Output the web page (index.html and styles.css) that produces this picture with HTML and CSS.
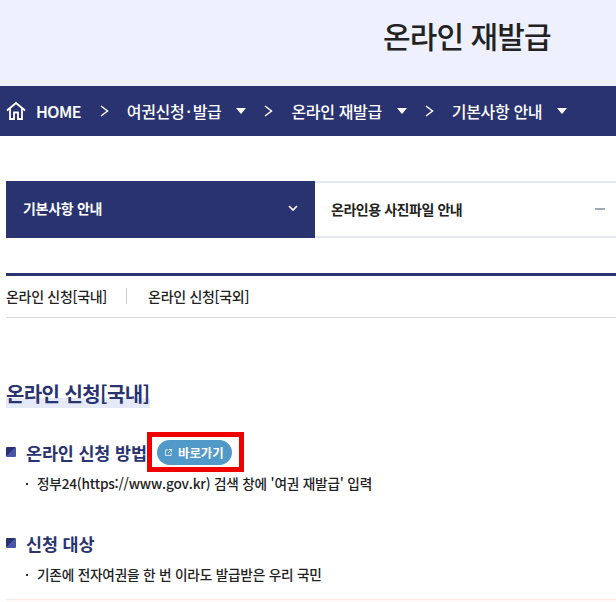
FILE: index.html
```html
<!DOCTYPE html>
<html lang="ko">
<head>
<meta charset="utf-8">
<title>온라인 재발급</title>
<link rel="stylesheet" href="styles.css">
</head>
<body>
<header class="hero"><h1 class="hero-title">온라인 재발급</h1></header>
<nav class="crumbs">
  <svg class="home" viewBox="0 0 20 20" width="20" height="20" fill="none" stroke="#fff" stroke-width="1.8"><path d="M1 9.500 10 2l9 7.500M4 7.500V18h4v-6.500h4V18h4V7.500"/></svg>
  <span class="crumb crumb-home">HOME</span>
  <svg class="sep" viewBox="0 0 9 14" width="9" height="14" fill="none" stroke="#fff" stroke-width="1.500"><path d="M1 2l6.500 5L1 12"/></svg>
  <span class="crumb">여권신청<span class="mid">·</span>발급</span><span class="tri"></span>
  <svg class="sep" viewBox="0 0 9 14" width="9" height="14" fill="none" stroke="#fff" stroke-width="1.500"><path d="M1 2l6.500 5L1 12"/></svg>
  <span class="crumb">온라인 재발급</span><span class="tri"></span>
  <svg class="sep" viewBox="0 0 9 14" width="9" height="14" fill="none" stroke="#fff" stroke-width="1.500"><path d="M1 2l6.500 5L1 12"/></svg>
  <span class="crumb">기본사항 안내</span><span class="tri"></span>
</nav>
<main class="content">
  <div class="tabs">
    <div class="tab tab-on"><span>기본사항 안내</span>
      <svg viewBox="0 0 10 7" width="10" height="7" fill="none" stroke="#fff" stroke-width="1.600"><path d="M1 1l4 4 4-4"/></svg>
    </div>
    <div class="tab tab-off"><span>온라인용 사진파일 안내</span><i class="dash"></i></div>
  </div>
  <div class="subtabs">
    <span class="subtab">온라인 신청[국내]</span>
    <span class="subtab subtab-next">온라인 신청[국외]</span>
  </div>
  <h2 class="section-title">온라인 신청[국내]</h2>
  <section class="block">
    <h3 class="block-title"><i class="bullet"></i>온라인 신청 방법
      <span class="btn-wrap"><a class="btn">
        <svg viewBox="0 0 8 8" width="7" height="7" fill="none" stroke="#fff" stroke-width="0.900"><path d="M3.500 1H.5v6.500H7V4.500M4.500.5h3v3M7.500.5 3.500 4.500"/></svg>바로가기</a></span>
    </h3>
    <p class="item">정부24(https://www.gov.kr) 검색 창에 '여권 재발급' 입력</p>
  </section>
  <section class="block block-2">
    <h3 class="block-title"><i class="bullet"></i>신청 대상</h3>
    <p class="item">기존에 전자여권을 한 번 이라도 발급받은 우리 국민</p>
  </section>
  <div class="note"></div>
</main>
</body>
</html>
```
FILE: styles.css
```css
* { box-sizing: border-box; }
html, body { margin: 0; padding: 0; }
body {
  width: 616px;
  height: 602px;
  overflow: hidden;
  background: #fff;
  font-family: "Noto Sans CJK KR", "Noto Sans", sans-serif;
  color: #222;
}
.hero { height: 86px; background: #eef0fd; padding: 13px 0 0 383px; }
.hero-title { margin: 0; font-size: 30px; line-height: 44px; font-weight: 500; color: #222; letter-spacing: -0.9px; white-space: nowrap; }
.crumbs { height: 50px; background: #29336f; display: flex; align-items: center; padding-left: 7px; color: #fff; }
.home { flex: none; margin-right: 10px; margin-left: -1px; }
.crumb { font-size: 16px; font-weight: 500; letter-spacing: -0.35px; white-space: nowrap; }
.crumb-home { letter-spacing: -0.5px; -webkit-text-stroke: 0.2px #fff; }
.mid { margin: 0 2px; }
.sep { flex: none; margin: 0 18px 0 19px; }
.tri { flex: none; width: 0; height: 0; margin-left: 15px; margin-right: -1px; border-left: 5px solid transparent; border-right: 5px solid transparent; border-top: 6px solid #fff; }
.content { padding: 45px 0 0 6px; }
.tabs { display: flex; height: 57px; }
.tab { display: flex; align-items: center; justify-content: space-between; font-size: 14px; line-height: 20px; font-weight: 700; letter-spacing: -0.3px; padding-bottom: 2px; }
.tab-on { width: 309px; background: #29336f; color: #fff; padding: 0 17px 3px 17px; }
.tab-off { flex: 1; border-top: 2px solid #e5e8ec; border-bottom: 2px solid #e5e8ec; padding: 0 11px 1px 16px; color: #222; letter-spacing: -0.45px; }
.dash { width: 10px; height: 2px; background: #a3a9b8; }
.subtabs { margin-top: 35px; height: 45px; border-top: 3px solid #29336f; border-bottom: 1px solid #dcdcdc; display: flex; align-items: center; font-size: 14px; font-weight: 500; letter-spacing: -0.3px; color: #222; padding-bottom: 2px; }
.subtab { line-height: 16px; }
.subtab-next { margin-left: 19px; padding-left: 21px; border-left: 1px solid #ccc; }
.section-title { display: inline-block; margin: 61px 0 0; height: 29px; font-size: 20px; line-height: 29px; font-weight: 700; letter-spacing: -0.6px; color: #29336f; background: linear-gradient(transparent 65%, #e5e9f8 65%); white-space: nowrap; }
.block { margin-top: 24px; }
.block-2 { margin-top: 30px; }
.block-title { margin: 0; height: 40px; display: flex; align-items: center; font-size: 17.4px; font-weight: 700; color: #29336f; letter-spacing: -0.1px; white-space: nowrap; }
.bullet { flex: none; width: 10px; height: 10px; margin-right: 10px; border-radius: 1px; background: linear-gradient(135deg, #29336f 50%, #4a55a8 50%); }
.btn-wrap { display: inline-flex; flex: none; border: 5px solid #f00000; padding: 5px; background: #fff; width: 97px; height: 40px; align-items: center; }
.btn { display: inline-flex; align-items: center; justify-content: center; gap: 6px; width: 75px; height: 25px; border-radius: 13px; background: #5199c9; color: #fff; font-size: 12.5px; font-weight: 700; letter-spacing: -0.1px; }
.item { margin: 1px 0 0 19px; font-size: 13.65px; line-height: 20px; font-weight: 500; letter-spacing: -0.2px; color: #222; position: relative; padding-left: 12px; white-space: nowrap; }
.item::before { content: ""; position: absolute; left: 1px; top: 10px; width: 2px; height: 2px; background: #333; }
.note { margin-top: 15px; height: 10px; border-top: 1px solid #fbe8e6; background: #fffafa; }
```
